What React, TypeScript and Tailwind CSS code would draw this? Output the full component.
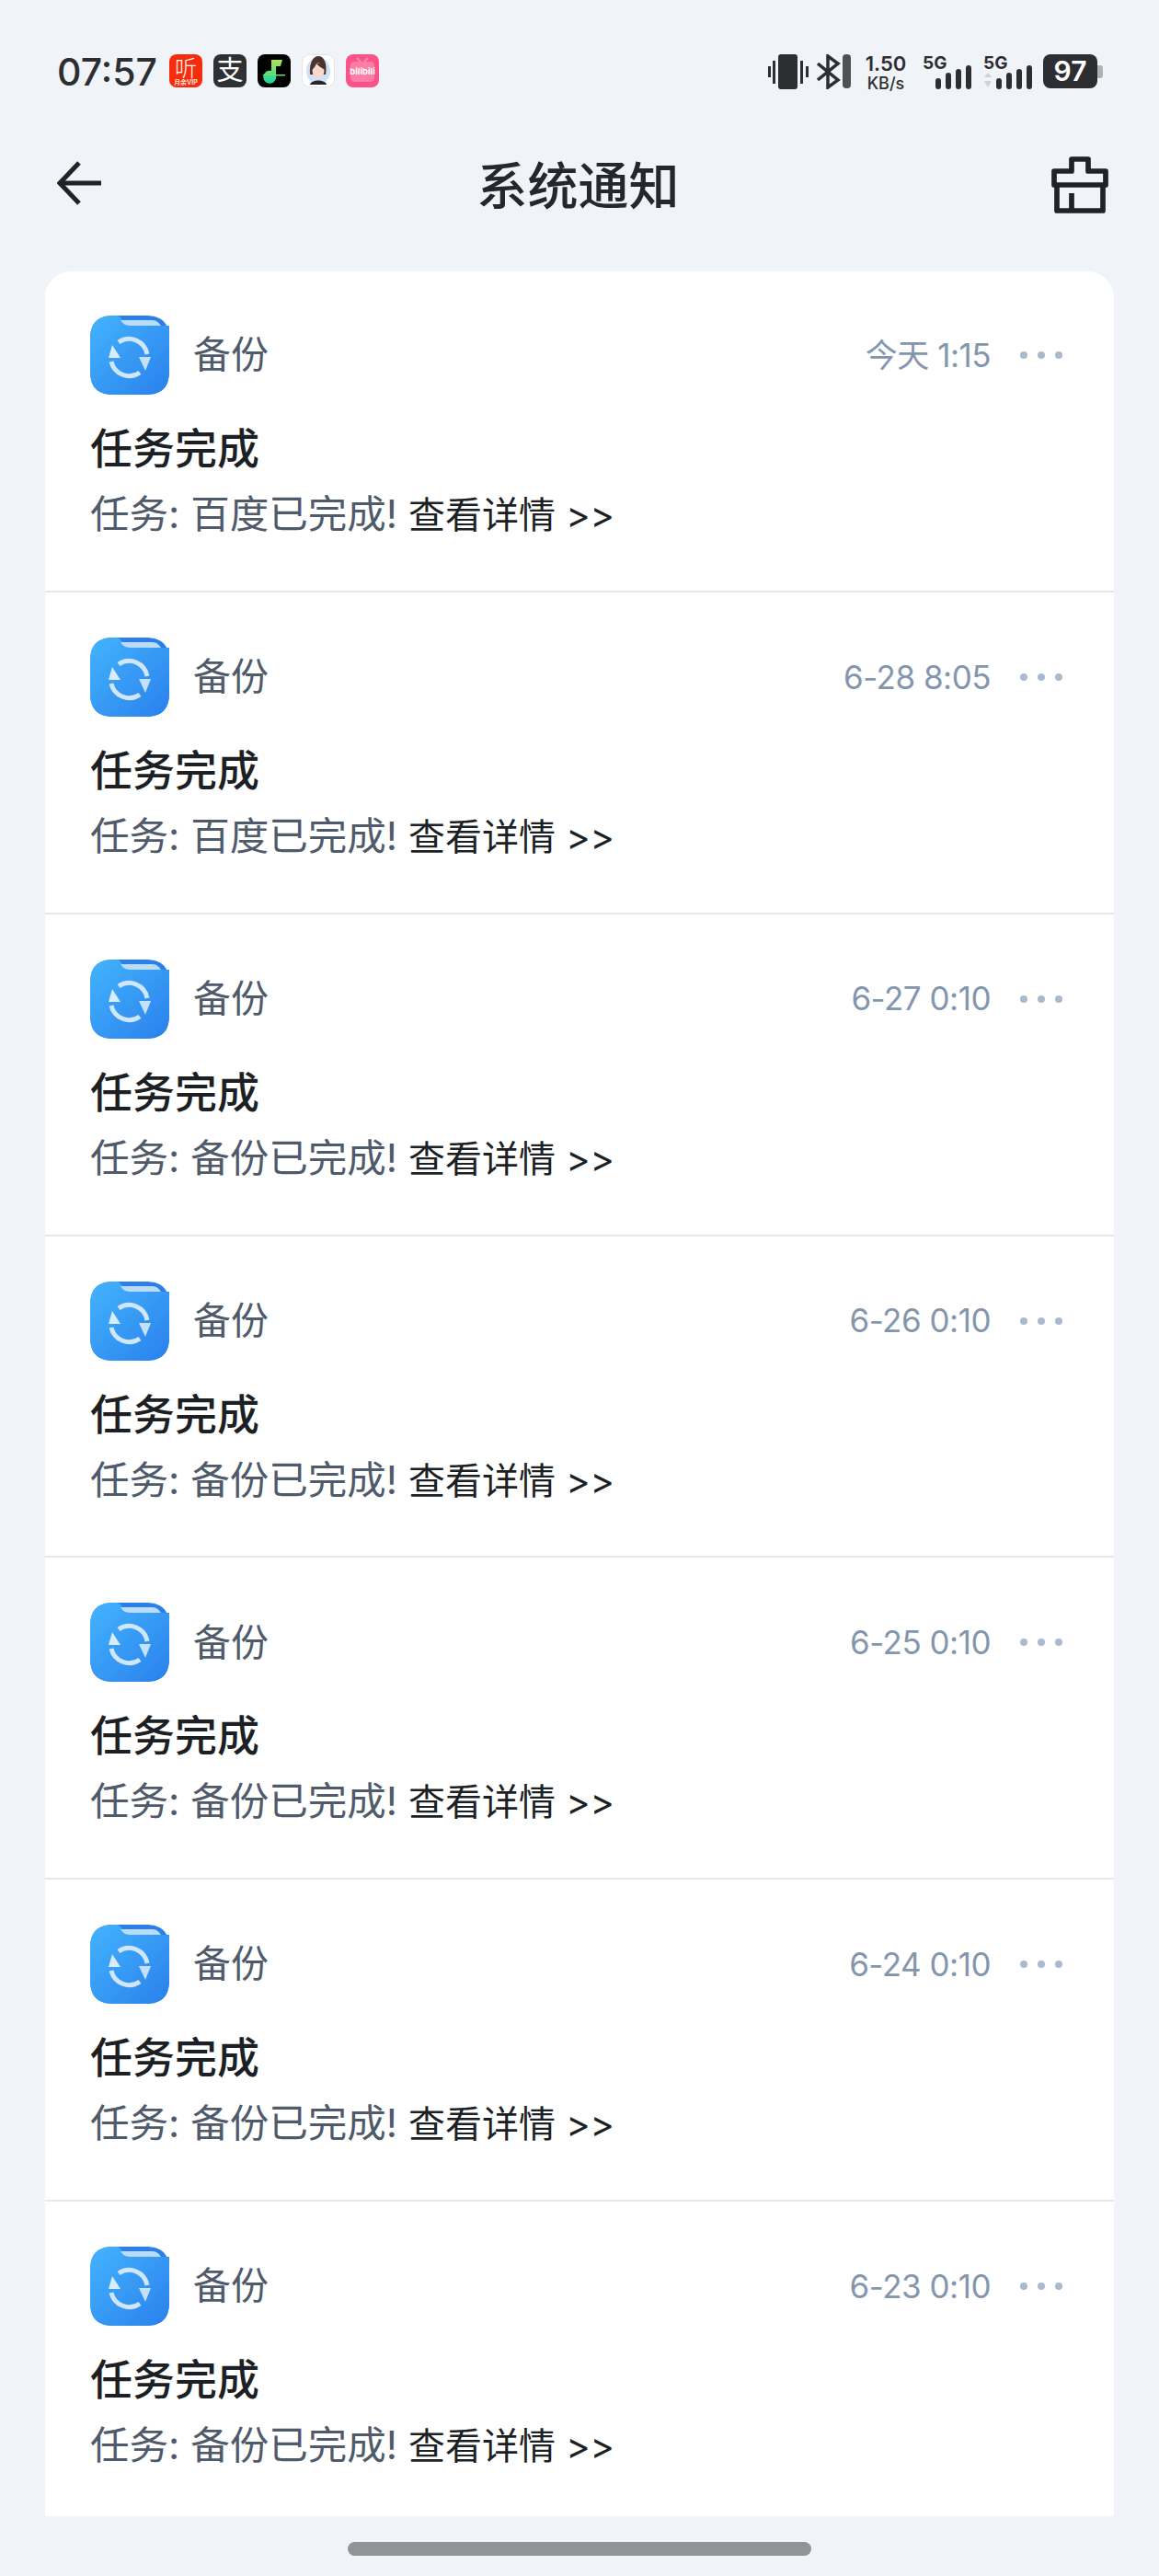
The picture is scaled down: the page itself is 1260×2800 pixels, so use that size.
const notices = [
  { time: "今天 1:15", app: "百度" },
  { time: "6-28 8:05", app: "百度" },
  { time: "6-27 0:10", app: "备份" },
  { time: "6-26 0:10", app: "备份" },
  { time: "6-25 0:10", app: "备份" },
  { time: "6-24 0:10", app: "备份" },
  { time: "6-23 0:10", app: "备份" },
];

function AppIcon() {
  return (
    <svg viewBox="0 0 86 86" className="h-[86px] w-[86px] shrink-0">
      <defs>
        <linearGradient id="backup-bg" x1="0" y1="0" x2="1" y2="1">
          <stop offset="0" stopColor="#43b4fd" />
          <stop offset="1" stopColor="#2a80ec" />
        </linearGradient>
      </defs>
      <path d="M26 0H60C78 0 86 8 86 26V60C86 78 78 86 60 86H26C8 86 0 78 0 60V26C0 8 8 0 26 0Z" fill="#2a7fe8" />
      <path d="M26 0H28C32 0 33 2 35 5C37 9 39 11 43 11H86V60C86 78 78 86 60 86H26C8 86 0 78 0 60V26C0 8 8 0 26 0Z" fill="url(#backup-bg)" />
      <path d="M33 5H68C72 5 75 8 77 11H43C38 11 35 8 33 5Z" fill="#b9dcfb" />
      <g fill="none" stroke="#cfe6fb" strokeWidth="5">
        <path d="M31 29A20 20 0 0 1 62 42" />
        <path d="M54 62A20 20 0 0 1 23 50" />
      </g>
      <path d="M24 32L33 46H20Z" fill="#d8ecfc" />
      <path d="M60 60L53 45H66Z" fill="#c4e0fa" />
    </svg>
  );
}

function NoticeRow({ time, app }: { time: string; app: string }) {
  return (
    <article className="mb-px h-[348.85px] border-b-2 border-[#e4e8ee] pl-[49px] pr-[56px] pt-[48px] last:border-b-0">
      <div className="flex h-[86px] items-center">
        <AppIcon />
        <span className="ml-[26px] text-[41px] text-[#4f5a6b]">备份</span>
        <span className="ml-auto text-[35px] tracking-[-0.5px] text-[#8496ad]">{time}</span>
        <div className="ml-[32px] flex gap-[11px]">
          <span className="h-2 w-2 rounded-full bg-[#a9bad0]" />
          <span className="h-2 w-2 rounded-full bg-[#a9bad0]" />
          <span className="h-2 w-2 rounded-full bg-[#a9bad0]" />
        </div>
      </div>
      <p className="mt-[27px] text-[46px] leading-[62px] font-medium text-[#1c1f24]">任务完成</p>
      <p className="mt-[11px] text-[42.5px] leading-[60px] text-[#4f5a6b]">
        任务: {app}已完成! <span className="text-[40px] text-[#1c1f24]">查看详情 &gt;&gt;</span>
      </p>
    </article>
  );
}

function StatusBar() {
  return (
    <div className="flex h-[156px] items-start pl-[62px] pr-[61px] pt-[59px]">
      <span className="mr-[16px] w-[106px] text-[41px] leading-[38px] font-medium text-[#2c2e32]">07:57</span>
      <div className="flex gap-[12px]">
        <svg viewBox="0 0 36 36" className="h-[36px] w-[36px]">
          <rect width="36" height="36" rx="8" fill="#f72c0c" />
          <text x="18" y="24" textAnchor="middle" fontSize="24" fontWeight="300" fill="#fff">听</text>
          <text x="18" y="33" textAnchor="middle" fontSize="7" fontWeight="700" fill="#ffe0da">月余VIP</text>
        </svg>
        <svg viewBox="0 0 36 36" className="h-[36px] w-[36px]">
          <rect width="36" height="36" rx="8" fill="#2e3033" />
          <text x="18" y="28" textAnchor="middle" fontSize="29" fill="#fff">支</text>
        </svg>
        <svg viewBox="0 0 36 36" className="h-[36px] w-[36px]">
          <defs>
            <linearGradient id="note" x1="0" y1="0" x2="0" y2="1">
              <stop offset="0" stopColor="#b4e34a" />
              <stop offset="1" stopColor="#12d9a0" />
            </linearGradient>
          </defs>
          <rect width="36" height="36" rx="8" fill="#000" />
          <path d="M15 6H27L25 13H20V23A7 7 0 1 1 15 18Z" fill="url(#note)" />
          <rect x="6" y="22" width="24" height="1.5" fill="url(#note)" />
        </svg>
        <svg viewBox="0 0 36 36" className="h-[36px] w-[36px]">
          <rect x=".5" y=".5" width="35" height="35" rx="8" fill="#fff" stroke="#e4e4e6" />
          <ellipse cx="18" cy="18" rx="13" ry="15" fill="#cfe3f7" />
          <path d="M9 22C8 8 13 2 18 2C24 2 28 9 26 22Z" fill="#4b3330" />
          <ellipse cx="18" cy="18" rx="6.5" ry="8.5" fill="#f6d8cc" />
          <path d="M11 17C14 15 15 12 16 10C19 14 23 15 25 17V10H11Z" fill="#4b3330" />
          <path d="M9 33C10 27 26 27 27 33Z" fill="#26262a" />
        </svg>
        <svg viewBox="0 0 36 36" className="h-[36px] w-[36px]">
          <rect width="36" height="36" rx="8" fill="#fb5389" />
          <path d="M12 4L16 8M24 4L20 8" stroke="#fd86ad" strokeWidth="2" />
          <rect x="5" y="8" width="26" height="22" rx="4" fill="#fd7da6" />
          <text x="18" y="22" textAnchor="middle" fontSize="9.5" fontWeight="700" fill="#fff">bilibili</text>
        </svg>
      </div>
      <div className="ml-auto flex items-start">
        <svg viewBox="0 0 44 38" className="h-[38px] w-[44px]">
          <rect x="11" y="0" width="21" height="38" rx="3" fill="#2c2e32" />
          <rect x="0" y="13" width="3" height="12" fill="#2c2e32" />
          <rect x="5" y="7" width="3" height="25" fill="#2c2e32" />
          <rect x="35" y="7" width="3" height="25" fill="#2c2e32" />
          <rect x="41" y="13" width="3" height="12" fill="#2c2e32" />
        </svg>
        <svg viewBox="0 0 38 38" className="ml-[9px] h-[38px] w-[38px]">
          <path d="M1 10L23 28L12 36V2L23 10L1 28" fill="none" stroke="#2c2e32" strokeWidth="3.5" />
          <rect x="28" y="0" width="9" height="37" rx="4" fill="#4f5153" />
        </svg>
        <div className="ml-[15px] flex w-[44px] flex-col items-center font-medium text-[#2c2e32]">
          <span className="text-[22px] leading-[20px] font-semibold">1.50</span>
          <span className="mt-[3px] text-[18px] leading-[17px]">KB/s</span>
        </div>
        <Signal className="ml-[18px]" />
        <Signal className="ml-[12px]" arrows />
        <div className="ml-[11px] flex items-center">
          <span className="flex h-[37px] w-[59px] items-center justify-center rounded-[8px] bg-[#2c2e32] text-[30px] font-semibold text-white">97</span>
          <span className="h-[14px] w-[6px] rounded-r-[3px] bg-[#b0b1b3]" />
        </div>
      </div>
    </div>
  );
}

function Signal({ arrows = false, className }: { arrows?: boolean; className: string }) {
  return (
    <div className={`relative h-[38px] w-[54px] ${className}`}>
      <span className="absolute left-0 top-[1px] text-[19px] leading-[18px] font-bold text-[#2c2e32]">5G</span>
      <svg viewBox="0 0 54 38" className="h-[38px] w-[54px]">
        {arrows && <path d="M1 25L5 20L9 25ZM1 29L9 29L5 36Z" fill="#cfd1d4" />}
        <rect x="14" y="26" width="6" height="12" rx="3" fill="#2c2e32" />
        <rect x="25" y="20" width="6" height="18" rx="3" fill="#2c2e32" />
        <rect x="36" y="16" width="6" height="22" rx="3" fill="#2c2e32" />
        <rect x="47" y="12" width="6" height="26" rx="3" fill="#2c2e32" />
      </svg>
    </div>
  );
}

function TopBar() {
  return (
    <header className="flex h-[139px] items-start justify-between pl-[62px] pr-[55px]">
      <svg viewBox="0 0 48 48" className="mt-[19px] h-[48px] w-[48px]">
        <path d="M24 2L3 24L24 46M3 24H48" fill="none" stroke="#1f2227" strokeWidth="5" />
      </svg>
      <h1 className="ml-[4px] mt-[8px] text-[55px] leading-[76px] font-medium text-[#24272b]">系统通知</h1>
      <svg viewBox="0 0 62 62" className="mt-[14px] h-[62px] w-[62px]">
        <path d="M22 16V3H40V16H59V31H3V16ZM6 31V59H56V31M22 40V59" fill="none" stroke="#1f2227" strokeWidth="5.7" strokeLinejoin="round" />
      </svg>
    </header>
  );
}

export default function App() {
  return (
    <div className="h-[2800px] w-[1260px] overflow-hidden bg-[#f0f3f8] font-['Inter','Noto_Sans_CJK_SC',sans-serif]">
      <StatusBar />
      <TopBar />
      <main className="mx-[49px] h-[2440px] overflow-hidden rounded-t-[28px] bg-white">
        {notices.map((notice) => (
          <NoticeRow key={notice.time} time={notice.time} app={notice.app} />
        ))}
      </main>
      <div className="mx-auto mt-[28px] h-[15px] w-[504px] rounded-full bg-[#929396]" />
    </div>
  );
}
